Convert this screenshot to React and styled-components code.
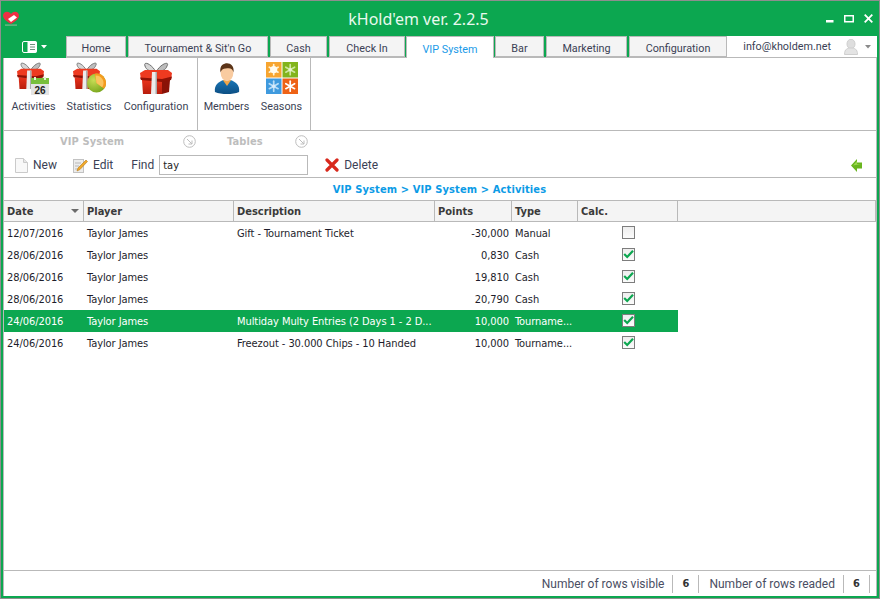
import React from "react";
import styled, { createGlobalStyle } from "styled-components";

const GlobalStyle = createGlobalStyle`
  html, body {
    margin: 0;
    padding: 0;
    background: #fff;
  }
  * {
    box-sizing: border-box;
  }
`;

const UI_FONT = `Roboto, "Noto Sans", sans-serif`;
const GRID_FONT = `"DejaVu Sans Condensed", "Noto Sans", sans-serif`;
const GREEN = "#0ca750";
const LINE = "#b9b9b9";
const COLUMNS = "80px 150px 201px 77px 66px 100px 198px";

const Frame = styled.div`
  width: 880px;
  height: 599px;
  border: 1px solid #8e8e8e;
  background: ${GREEN};
  padding: 0 2px 2px;
  display: flex;
  flex-direction: column;
  font-family: ${UI_FONT};
  overflow: hidden;
`;

const TitleBar = styled.div`
  height: 35px;
  flex: none;
  display: flex;
  align-items: center;
`;

const Logo = styled.svg`
  width: 16px;
  height: 15px;
  flex: none;
`;

const Title = styled.div`
  flex: 1;
  text-align: center;
  color: #e9f9ee;
  font-family: "Noto Sans", sans-serif;
  font-size: 16px;
  padding-right: 8px;
`;

const WindowButtons = styled.div`
  display: flex;
  align-items: center;
  gap: 10px;
  padding-right: 4px;
`;

const TabStrip = styled.div`
  height: 22px;
  flex: none;
  display: flex;
  align-items: stretch;
`;

const AppButton = styled.div`
  width: 63px;
  flex: none;
  display: flex;
  align-items: center;
  justify-content: center;
  gap: 4px;
`;

const TabRow = styled.div`
  flex: 1;
  display: flex;
  gap: 2px;
  border-bottom: 1px solid ${LINE};
`;

const Tab = styled.div`
  width: ${(p) => p.$width}px;
  flex: none;
  margin: ${(p) => (p.$active ? "0 -1px -1px -1px" : "0")};
  display: flex;
  align-items: center;
  justify-content: center;
  padding-top: 3px;
  font-size: 10.8px;
  color: ${(p) => (p.$active ? "#1a9be8" : "#3b3f55")};
  background: ${(p) => (p.$active ? "#fff" : "#f4f4f4")};
  border: 1px solid ${LINE};
  border-bottom: ${(p) => (p.$active ? "none" : `1px solid ${LINE}`)};
`;

const UserArea = styled.div`
  flex: 1;
  background: #fff;
  display: flex;
  align-items: center;
  justify-content: flex-end;
  padding-right: 6px;
  margin-left: -2px;
  font-size: 10.8px;
  color: #3b3f55;
`;

const UserName = styled.span`
  margin-right: 13px;
`;

const UserCaret = styled.span`
  display: flex;
  margin-left: 7px;
`;

const Body = styled.div`
  flex: 1;
  min-height: 0;
  background: #fff;
  border-left: 1px solid ${LINE};
  border-right: 1px solid ${LINE};
  display: flex;
  flex-direction: column;
`;

const Ribbon = styled.div`
  height: 73px;
  flex: none;
  display: flex;
  border-bottom: 1px solid ${LINE};
`;

const RibbonGroup = styled.div`
  display: flex;
  padding: 4px 0 0 ${(p) => p.$pad}px;
  width: ${(p) => p.$width}px;
  border-right: 1px solid ${LINE};
`;

const RibbonItem = styled.div`
  width: ${(p) => p.$width}px;
  flex: none;
  display: flex;
  flex-direction: column;
  align-items: center;
  gap: 4px;
  font-size: 10.8px;
  color: #3b3f55;
  white-space: nowrap;
`;

const IconSlot = styled.div`
  height: 34px;
  display: flex;
  align-items: flex-start;
`;

const ToolArea = styled.div`
  height: 47px;
  flex: none;
  border-bottom: 1px solid ${LINE};
  display: flex;
  flex-direction: column;
`;

const GroupCaptions = styled.div`
  height: 20px;
  display: flex;
  align-items: center;
`;

const GroupCaption = styled.div`
  width: ${(p) => p.$width}px;
  display: flex;
  align-items: center;
  justify-content: space-between;
  padding-left: ${(p) => p.$pad}px;
  font-family: ${GRID_FONT};
  font-size: 11px;
  font-weight: bold;
  letter-spacing: 0.1px;
  color: #bdbdbd;
`;

const ToolRow = styled.div`
  flex: 1;
  display: flex;
  align-items: center;
  padding: 2px 14px 0 11px;
  font-size: 12px;
  color: #3b3f55;
`;

const ToolButton = styled.div`
  display: flex;
  align-items: center;
  gap: 5px;
  margin-right: ${(p) => p.$gap}px;
`;

const FindBox = styled.input`
  width: 149px;
  height: 20px;
  margin: 0 17px 0 5px;
  padding: 0 3px;
  border: 1px solid ${LINE};
  outline: none;
  font-family: ${GRID_FONT};
  font-size: 11px;
  color: #222;
`;

const Spacer = styled.div`
  flex: 1;
`;

const Breadcrumb = styled.div`
  height: 22px;
  flex: none;
  display: flex;
  align-items: center;
  justify-content: center;
  padding-right: 1px;
  font-family: ${GRID_FONT};
  font-size: 11px;
  font-weight: bold;
  letter-spacing: 0.12px;
  color: #0c9be6;
`;

const GridHeader = styled.div`
  height: 22px;
  flex: none;
  display: grid;
  grid-template-columns: ${COLUMNS};
  background: #f4f4f4;
  border-top: 1px solid ${LINE};
  border-bottom: 1px solid ${LINE};
`;

const HeaderCell = styled.div`
  display: flex;
  align-items: center;
  justify-content: space-between;
  padding: 0 6px 0 3px;
  font-family: ${GRID_FONT};
  font-size: 11px;
  font-weight: bold;
  color: #3a3a3a;
  border-right: 1px solid ${LINE};
`;

const SortArrow = styled.span`
  width: 0;
  height: 0;
  border-left: 4px solid transparent;
  border-right: 4px solid transparent;
  border-top: 4px solid #6b6b6b;
  margin-right: -2px;
`;

const GridBody = styled.div`
  flex: 1;
  min-height: 0;
`;

const Row = styled.div`
  height: 22px;
  width: 674px;
  display: grid;
  grid-template-columns: 80px 150px 201px 77px 66px 100px;
  align-items: center;
  font-family: ${GRID_FONT};
  font-size: 11px;
  letter-spacing: -0.07px;
  color: ${(p) => (p.$selected ? "#fff" : "#1d1d2b")};
  background: ${(p) => (p.$selected ? GREEN : "transparent")};
`;

const Cell = styled.div`
  padding: 0 3px;
  white-space: nowrap;
  text-align: ${(p) => (p.$right ? "right" : "left")};
`;

const CheckCell = styled.div`
  display: flex;
  justify-content: center;
  padding-bottom: 2px;
`;

const CheckBox = styled.span`
  width: 13px;
  height: 13px;
  display: flex;
  align-items: center;
  justify-content: center;
  border: 1px solid #7d7d7d;
  background: linear-gradient(#eeeeee, #fbfbfb);
`;

const StatusBar = styled.div`
  height: 26px;
  flex: none;
  border-top: 1px solid ${LINE};
  display: flex;
  align-items: center;
  justify-content: flex-end;
  padding-right: 6px;
  font-size: 12px;
  color: #4a4e63;
`;

const StatusLabel = styled.div`
  height: 18px;
  padding: 0 8px 0 10px;
  line-height: 18px;
  border-right: 1px solid ${LINE};
`;

const StatusValue = styled(StatusLabel)`
  width: 26px;
  padding: 0;
  text-align: center;
  font-family: ${GRID_FONT};
  font-weight: bold;
  font-size: 11px;
  color: #333;
`;

const Overlaid = styled.div`
  position: relative;
  width: 33px;
  height: 34px;
  .badge {
    position: absolute;
    right: ${(p) => p.$right}px;
    bottom: ${(p) => p.$bottom}px;
  }
`;

const GiftIcon = ({ id, size = 32 }) => (
  <svg width={size} height={size} viewBox="0 0 32 32">
    <defs>
      <linearGradient id={id} x1="0" y1="0" x2="0" y2="1">
        <stop offset="0" stopColor="#e8321c" />
        <stop offset="1" stopColor="#b81d0c" />
      </linearGradient>
    </defs>
    <path d="M16 10 C11 1 3 -1 5 4 C6 8 11 10 16 10 Z" fill="#d5d5d5" stroke="#6f6f6f" strokeWidth="1" />
    <path d="M16 10 C21 1 30 -1 27 4 C26 8 21 10 16 10 Z" fill="#bdbdbd" stroke="#6f6f6f" strokeWidth="1" />
    <path d="M5 8 L28 8 L32 11 L31 18 L1 18 L0 11 Z" fill="#ee3a20" />
    <path d="M2 18 L22 18 L22 32 L3 32 Z" fill={`url(#${id})`} />
    <path d="M22 18 L30 18 L29 30 L22 32 Z" fill="#8a1207" />
    <path d="M0 15.5 L22 17 L32 14.5 L31 18 L22 20 L1 18 Z" fill="#8f1206" />
    <path d="M12 10 L17 10 L17 32 L11 32 Z" fill="#ececec" />
    <path d="M15.5 10 L17 10 L17 32 L15.5 32 Z" fill="#a9a9a9" />
  </svg>
);

const CalendarGift = () => (
  <Overlaid $right={1} $bottom={1}>
    <GiftIcon id="giftA" size={27} />
    <svg width="18" height="18" viewBox="0 0 18 18" className="badge">
      <rect y="1" width="18" height="7" fill="#78bf3c" />
      <rect x="3" y="0" width="2" height="3" fill="#e5f2d5" />
      <rect x="13" y="0" width="2" height="3" fill="#e5f2d5" />
      <rect y="7" width="18" height="11" fill="#e4e4e4" />
      <text x="9" y="16.5" textAnchor="middle" fontSize="10" fontWeight="bold" fontFamily="Liberation Sans, sans-serif" fill="#222">26</text>
    </svg>
  </Overlaid>
);

const PieGift = () => (
  <Overlaid $right={0} $bottom={3}>
    <GiftIcon id="giftB" size={27} />
    <svg width="19" height="20" viewBox="0 0 20 20" className="badge">
      <defs>
        <radialGradient id="pieDisc" cx="0.35" cy="0.35" r="0.8">
          <stop offset="0" stopColor="#c7dd55" />
          <stop offset="1" stopColor="#6f9f16" />
        </radialGradient>
      </defs>
      <circle cx="10" cy="10" r="10" fill="url(#pieDisc)" />
      <path d="M10 10 L8 .2 A10 10 0 0 1 18 16 Z" fill="#f49b1f" />
      <path d="M10 10 L9 2 A8 8 0 0 1 16 14.5 Z" fill="#fbc45e" />
    </svg>
  </Overlaid>
);

const MemberIcon = () => (
  <svg width="26" height="33" viewBox="0 0 28 33">
    <defs>
      <linearGradient id="memberBody" x1="0" y1="0" x2="0" y2="1">
        <stop offset="0" stopColor="#1a76b5" />
        <stop offset="1" stopColor="#0c4f84" />
      </linearGradient>
    </defs>
    <path d="M1 31 C0 23 5 20 10 18 L18 18 C23 20 28 23 27 31 C20 34 8 34 1 31 Z" fill="url(#memberBody)" />
    <path d="M9.5 18 L14 24.5 L18.5 18 Z" fill="#f0a548" />
    <ellipse cx="14" cy="10.5" rx="6.8" ry="9" fill="#f9cba0" />
    <path d="M7 10 C5.5 2 11 0 14 0 C18 0 22 3 21 10 C20 6 18 5 14 5.5 C11 6 8.5 6 7 10 Z" fill="#5b3418" />
  </svg>
);

const Flake = ({ x, y, color }) => (
  <g stroke={color} strokeWidth="1.7" strokeLinecap="round">
    <line x1={x} y1={y - 5} x2={x} y2={y + 5} />
    <line x1={x - 4.4} y1={y - 2.5} x2={x + 4.4} y2={y + 2.5} />
    <line x1={x + 4.4} y1={y - 2.5} x2={x - 4.4} y2={y + 2.5} />
  </g>
);

const SeasonsIcon = () => (
  <svg width="32" height="32" viewBox="0 0 32 32">
    <rect width="15.5" height="15.5" fill="#f7a530" />
    <rect x="16.5" width="15.5" height="15.5" fill="#82b41c" />
    <rect y="16.5" width="15.5" height="15.5" fill="#3f9ade" />
    <rect x="16.5" y="16.5" width="15.5" height="15.5" fill="#ee6216" />
    <Flake x={7.7} y={7.7} color="#fff3d4" />
    <circle cx="7.7" cy="7.7" r="3.6" fill="#fffbee" />
    <Flake x={24.2} y={7.7} color="#cfe79f" />
    <circle cx="24.2" cy="7.7" r="1.8" fill="#e8f4cf" />
    <Flake x={7.7} y={24.2} color="#b9dcf6" />
    <circle cx="7.7" cy="24.2" r="1.8" fill="#d7ebfb" />
    <Flake x={24.2} y={24.2} color="#fff" />
  </svg>
);

const PageIcon = () => (
  <svg width="13" height="15" viewBox="0 0 13 15">
    <path d="M.5 .5 H8.5 L12.5 4.5 V14.5 H.5 Z" fill="#f8f8f8" stroke="#cacaca" />
    <path d="M8.5 .5 V4.5 H12.5" fill="#e6e6e6" stroke="#cacaca" />
  </svg>
);

const EditIcon = () => (
  <svg width="15" height="16" viewBox="0 0 15 16">
    <rect x=".5" y="2.5" width="10" height="13" fill="#ececec" stroke="#c2c2c2" />
    <path d="M2 6 H8 M2 9 H6 M2 12 H5" stroke="#b8b8b8" />
    <path d="M13 3 L14.5 4.5 L7 12.5 L4 14 L5 11 Z" fill="#efa92c" stroke="#b87a17" strokeWidth=".6" />
  </svg>
);

const DeleteIcon = () => (
  <svg width="14" height="14" viewBox="0 0 14 14">
    <path d="M2 2 L12 12 M12 2 L2 12" stroke="#d8281c" strokeWidth="3.2" strokeLinecap="round" />
  </svg>
);

const BackArrow = () => (
  <svg width="11" height="13" viewBox="0 0 11 13">
    <path d="M0 6.5 L6 0 V3.5 H11 V9.5 H6 V13 Z" fill="#69b51f" />
    <path d="M2 6.5 L6 2 V5 H10" fill="#9bd84f" />
  </svg>
);

const RoundArrow = () => (
  <svg width="13" height="13" viewBox="0 0 13 13" fill="none" stroke="#bdbdbd">
    <circle cx="6.5" cy="6.5" r="5.8" />
    <path d="M4 4 L9 9 M9 5.5 V9 H5.5" />
  </svg>
);

const UserIcon = () => (
  <svg width="14" height="16" viewBox="0 0 14 16">
    <ellipse cx="7" cy="5" rx="4" ry="4.8" fill="#dedede" stroke="#cfcfcf" />
    <path d="M.5 15.5 C.5 10 3.5 9 7 9 C10.5 9 13.5 10 13.5 15.5 Z" fill="#e4e4e4" stroke="#cfcfcf" />
  </svg>
);

const SmallCaret = ({ color }) => (
  <svg width="6" height="4" viewBox="0 0 6 4">
    <path d="M0 0 H6 L3 3.5 Z" fill={color} />
  </svg>
);

const Check = () => (
  <svg width="11" height="10" viewBox="0 0 11 10" fill="none">
    <path d="M1.2 5 L4.2 8 L10 1.8" stroke="#0ca750" strokeWidth="2.2" />
  </svg>
);

const tabs = [
  { label: "Home", width: 60 },
  { label: "Tournament & Sit'n Go", width: 140 },
  { label: "Cash", width: 57 },
  { label: "Check In", width: 76 },
  { label: "VIP System", width: 88, active: true },
  { label: "Bar", width: 49 },
  { label: "Marketing", width: 81 },
  { label: "Configuration", width: 98 },
];

const headers = ["Player", "Description", "Points", "Type", "Calc.", ""];

const rows = [
  { date: "12/07/2016", desc: "Gift - Tournament Ticket", points: "-30,000", type: "Manual", calc: false },
  { date: "28/06/2016", desc: "", points: "0,830", type: "Cash", calc: true },
  { date: "28/06/2016", desc: "", points: "19,810", type: "Cash", calc: true },
  { date: "28/06/2016", desc: "", points: "20,790", type: "Cash", calc: true },
  { date: "24/06/2016", desc: "Multiday Multy Entries (2 Days 1 - 2 D...", points: "10,000", type: "Tourname...", calc: true, selected: true },
  { date: "24/06/2016", desc: "Freezout - 30.000 Chips - 10 Handed", points: "10,000", type: "Tourname...", calc: true },
];

const App = () => (
  <>
    <GlobalStyle />
    <Frame>
      <TitleBar>
        <Logo viewBox="0 0 16 15">
          <path d="M8 13 C2 9.5 0 7 0 4.5 C0 1 5 -1 8 3 C11 -1 16 1 16 4.5 C16 7 14 9.5 8 13 Z" fill="#ee2f43" />
          <path d="M5 8 L11 4 L14 6.5 L8 11 Z" fill="#fff" />
          <rect x="2" y="13.5" width="12" height="1.2" fill="#7fb98f" />
        </Logo>
        <Title>kHold'em ver. 2.2.5</Title>
        <WindowButtons>
          <svg width="8" height="8" viewBox="0 0 8 8"><rect y="5" width="7.5" height="2.5" fill="#fff" /></svg>
          <svg width="10" height="8" viewBox="0 0 10 8"><rect x=".75" y=".75" width="8.5" height="6" fill="none" stroke="#fff" strokeWidth="1.5" /></svg>
          <svg width="9" height="9" viewBox="0 0 9 9"><path d="M.7 .7 L8.3 8.3 M8.3 .7 L.7 8.3" stroke="#fff" strokeWidth="1.8" /></svg>
        </WindowButtons>
      </TitleBar>
      <TabStrip>
        <AppButton>
          <svg width="15" height="12" viewBox="0 0 15 12" fill="none" stroke="#fff">
            <rect x="6" y="1" width="8" height="10" fill="#fff" />
            <rect x=".5" y=".5" width="14" height="11" rx="1.5" />
            <path d="M8 3.5 H13 M8 6 H13 M8 8.5 H13" stroke="#6f8f7d" />
          </svg>
          <SmallCaret color="#fff" />
        </AppButton>
        <TabRow>
          {tabs.map((t) => (
            <Tab key={t.label} $width={t.width} $active={t.active}>
              {t.label}
            </Tab>
          ))}
          <UserArea>
            <UserName>info@kholdem.net</UserName>
            <UserIcon />
            <UserCaret><SmallCaret color="#8a8a8a" /></UserCaret>
          </UserArea>
        </TabRow>
      </TabStrip>
      <Body>
        <Ribbon>
          <RibbonGroup $width={194} $pad={8}>
            <RibbonItem $width={43}><IconSlot><CalendarGift /></IconSlot>Activities</RibbonItem>
            <RibbonItem $width={68}><IconSlot><PieGift /></IconSlot>Statistics</RibbonItem>
            <RibbonItem $width={66}><IconSlot><GiftIcon id="giftC" /></IconSlot>Configuration</RibbonItem>
          </RibbonGroup>
          <RibbonGroup $width={113} $pad={4}>
            <RibbonItem $width={49}><IconSlot><MemberIcon /></IconSlot>Members</RibbonItem>
            <RibbonItem $width={61}><IconSlot><SeasonsIcon /></IconSlot>Seasons</RibbonItem>
          </RibbonGroup>
        </Ribbon>
        <ToolArea>
          <GroupCaptions>
            <GroupCaption $width={192} $pad={56}>VIP System<RoundArrow /></GroupCaption>
            <GroupCaption $width={112} $pad={31}>Tables<RoundArrow /></GroupCaption>
          </GroupCaptions>
          <ToolRow>
            <ToolButton $gap={16}><PageIcon />New</ToolButton>
            <ToolButton $gap={18}><EditIcon />Edit</ToolButton>
            Find
            <FindBox defaultValue="tay" />
            <ToolButton $gap={0}><DeleteIcon />Delete</ToolButton>
            <Spacer />
            <BackArrow />
          </ToolRow>
        </ToolArea>
        <Breadcrumb>VIP System &gt; VIP System &gt; Activities</Breadcrumb>
        <GridHeader>
          <HeaderCell>Date<SortArrow /></HeaderCell>
          {headers.map((h, i) => (
            <HeaderCell key={i}>{h}</HeaderCell>
          ))}
        </GridHeader>
        <GridBody>
          {rows.map((r, i) => (
            <Row key={i} $selected={r.selected}>
              <Cell>{r.date}</Cell>
              <Cell>Taylor James</Cell>
              <Cell>{r.desc}</Cell>
              <Cell $right>{r.points}</Cell>
              <Cell>{r.type}</Cell>
              <CheckCell>
                <CheckBox>{r.calc && <Check />}</CheckBox>
              </CheckCell>
            </Row>
          ))}
        </GridBody>
        <StatusBar>
          <StatusLabel>Number of rows visible</StatusLabel>
          <StatusValue>6</StatusValue>
          <StatusLabel>Number of rows readed</StatusLabel>
          <StatusValue>6</StatusValue>
        </StatusBar>
      </Body>
    </Frame>
  </>
);

export default App;
